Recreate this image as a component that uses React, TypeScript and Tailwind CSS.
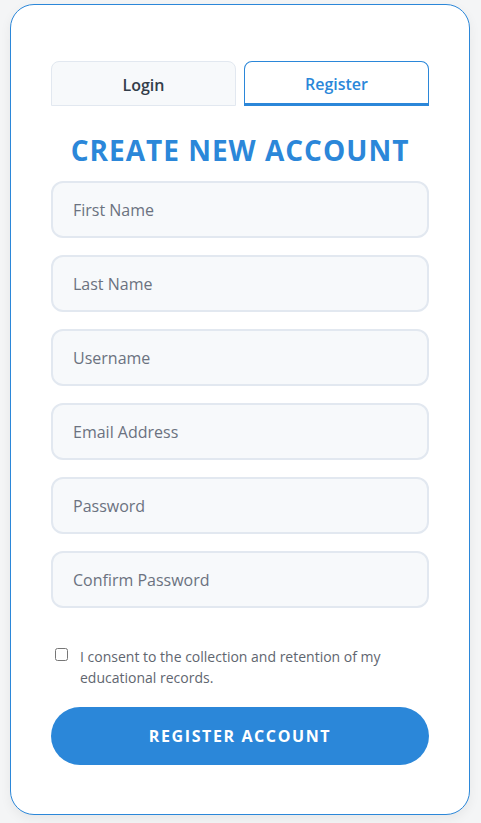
import { useState } from "react";

const fields = [
  { name: "firstName", placeholder: "First Name", type: "text" },
  { name: "lastName", placeholder: "Last Name", type: "text" },
  { name: "username", placeholder: "Username", type: "text" },
  { name: "email", placeholder: "Email Address", type: "email" },
  { name: "password", placeholder: "Password", type: "password" },
  { name: "confirm", placeholder: "Confirm Password", type: "password" },
];

export default function App() {
  const [tab, setTab] = useState<"login" | "register">("register");
  const [consent, setConsent] = useState(false);

  return (
    <div
      className="min-h-[823px] bg-[#f4f5f6] pt-[4px] pl-[10px] pr-[11px]"
      style={{ fontFamily: '"Open Sans", "Liberation Sans", sans-serif' }}
    >
      <div className="w-[460px] h-[811px] rounded-[24px] border border-[#2b87d9] bg-white px-[40px] pt-[56px] shadow-[0_4px_12px_rgba(0,0,0,0.06)]">
        {/* Tabs */}
        <div className="flex gap-[8px]">
          <button
            onClick={() => setTab("login")}
            className={`flex-1 h-[45px] pt-[2px] rounded-t-[8px] text-[16px] font-semibold ${
              tab === "login"
                ? "border border-[#2b87d9] border-b-[3px] bg-white text-[#2b87d9]"
                : "border border-[#e2e8f0] bg-[#f7f9fb] text-[#333d4a]"
            }`}
          >
            Login
          </button>
          <button
            onClick={() => setTab("register")}
            className={`flex-1 h-[45px] pt-[2px] rounded-t-[8px] text-[16px] font-semibold ${
              tab === "register"
                ? "border border-[#2b87d9] border-b-[3px] bg-white text-[#2b87d9]"
                : "border border-[#e2e8f0] bg-[#f7f9fb] text-[#333d4a]"
            }`}
          >
            Register
          </button>
        </div>

        <h1 className="mt-[27px] text-center text-[28px] leading-[34px] font-bold tracking-[1px] text-[#2b87d9]">
          CREATE NEW ACCOUNT
        </h1>

        {/* Fields */}
        <div className="mt-[14px] flex flex-col gap-[17px]">
          {fields.map((f) => (
            <input
              key={f.name}
              type={f.type}
              placeholder={f.placeholder}
              className="h-[57px] w-full rounded-[12px] border-2 border-[#e2e8f0] bg-[#f7f9fb] px-[20px] text-[16px] text-[#333d4a] placeholder:text-[#6b7280] outline-none"
            />
          ))}
        </div>

        {/* Consent */}
        <label className="mt-[38px] flex items-start gap-[12px] pl-[4px] cursor-pointer">
          <input
            type="checkbox"
            checked={consent}
            onChange={(e) => setConsent(e.target.checked)}
            className="mt-[2px] h-[13px] w-[13px] shrink-0"
          />
          <span className="text-[14px] leading-[21px] text-[#5f6670]">
            I consent to the collection and retention of my educational records.
          </span>
        </label>

        <button className="mt-[19px] h-[58px] w-full rounded-full bg-[#2b87d9] text-[16px] font-bold tracking-[1.6px] text-white">
          REGISTER ACCOUNT
        </button>
      </div>
    </div>
  );
}
